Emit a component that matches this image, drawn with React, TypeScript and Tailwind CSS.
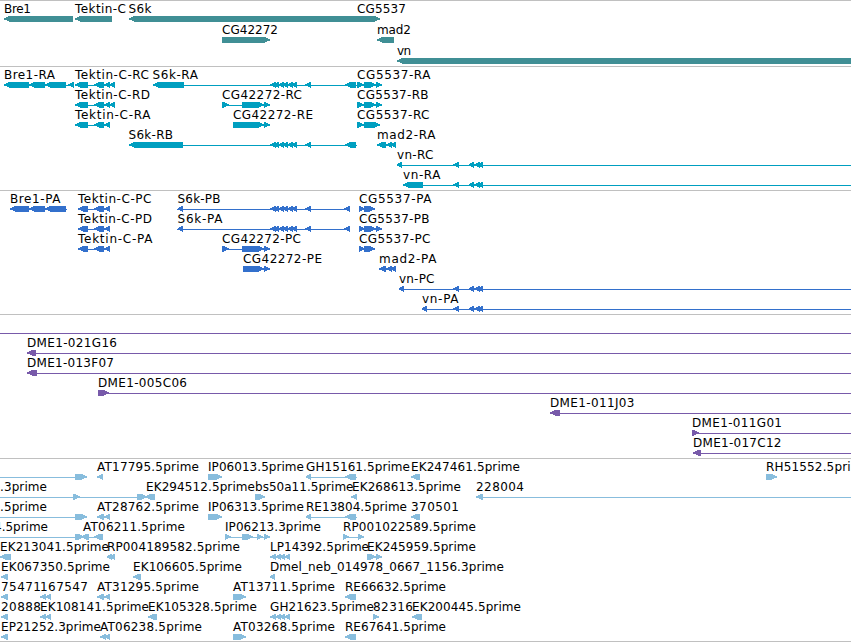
// GenomeTracks.tsx
type Dir = "L" | "R";

// [direction, start, end]
type Exon = [Dir, number, number];

interface Feature {
  name?: string;
  x?: number;
  end?: number; // right edge of the label
  line?: [number, number];
  exons?: Exon[];
}

interface TrackData {
  id: string;
  height: number;
  pitch: number;
  color: string;
  rows: Feature[][];
}

const WIDTH = 851;

// run of short exons whose heads overlap
const tips = (xs: number[], last: number): Exon[] =>
  xs.map((x) => ["L", x, Math.min(x + 6, last)]);

// exon groups shared by several transcripts
const s6k = tips([270, 273, 278, 282, 287, 291], 297);
const vn: Exon[] = [["L", 453, 459], ["L", 469, 474], ["L", 474, 480], ["L", 478, 483]];
const lp = tips([270, 275, 279, 284], 290);
const cg42272: Exon[] = [["R", 222, 229], ["R", 242, 264], ["R", 264, 270]];

const tracks: TrackData[] = [
  {
    id: "gene",
    height: 66,
    pitch: 21,
    color: "#408f95",
    rows: [
      [
        { name: "Bre1", x: 4, end: 31, exons: [["L", 4, 73]] },
        { name: "Tektin-C", x: 75, end: 126, exons: [["L", 75, 112]] },
        { name: "S6k", x: 128.5, end: 151.5, exons: [["L", 129, 358]] },
        { name: "CG5537", x: 357, end: 406, exons: [["R", 357, 380]] },
      ],
      [
        { name: "CG42272", x: 222, end: 278, exons: [["R", 222, 270]] },
        { name: "mad2", x: 377, end: 411, exons: [["L", 377, 394]] },
      ],
      [{ name: "vn", x: 397, end: 411, exons: [["L", 397, 851]] }],
    ],
  },
  {
    id: "transcript",
    height: 124,
    pitch: 20,
    color: "#009fc0",
    rows: [
      [
        { name: "Bre1-RA", x: 4, end: 55, line: [4, 74], exons: [["L", 4, 29], ["L", 29, 45], ["L", 45, 66], ["L", 68, 74]] },
        { name: "Tektin-C-RC", x: 75, end: 149, line: [75, 115], exons: [["L", 75, 88], ["L", 94, 104], ["L", 104, 110], ["L", 109, 115]] },
        { name: "S6k-RA", x: 152.5, end: 198, line: [153, 357], exons: [["L", 153, 184], ...s6k, ["L", 305, 311], ["L", 345, 356]] },
        { name: "CG5537-RA", x: 357, end: 430.5, line: [357, 381], exons: [["R", 357, 364], ["R", 364, 376], ["R", 376, 382]] },
      ],
      [
        { name: "Tektin-C-RD", x: 75, end: 150, line: [75, 115], exons: [["L", 75, 88], ["L", 94, 104], ["L", 104, 110], ["L", 109, 115]] },
        { name: "CG42272-RC", x: 222, end: 302, line: [222, 269], exons: cg42272 },
        { name: "CG5537-RB", x: 357, end: 428.5, line: [357, 381], exons: [["R", 357, 364], ["R", 364, 376], ["R", 376, 382]] },
      ],
      [
        { name: "Tektin-C-RA", x: 75, end: 150.5, line: [75, 110], exons: [["L", 75, 88], ["L", 94, 104], ["L", 104, 110]] },
        { name: "CG42272-RE", x: 233, end: 313, line: [233, 269], exons: [["R", 233, 264], ["R", 264, 270]] },
        { name: "CG5537-RC", x: 357, end: 429.5, line: [357, 379], exons: [["R", 357, 364], ["R", 364, 380]] },
      ],
      [
        { name: "S6k-RB", x: 128.5, end: 173, line: [129, 357], exons: [["L", 129, 183], ...s6k, ["L", 305, 311], ["L", 345, 356]] },
        { name: "mad2-RA", x: 377, end: 435.5, line: [377, 396], exons: [["L", 377, 386], ["L", 386, 392], ["L", 390, 396]] },
      ],
      [{ name: "vn-RC", x: 397, end: 433.5, line: [397, 851], exons: [["L", 397, 402], ...vn] }],
      [{ name: "vn-RA", x: 403, end: 440.5, line: [403, 851], exons: [["L", 403, 423], ...vn] }],
    ],
  },
  {
    id: "protein",
    height: 124,
    pitch: 20,
    color: "#3370cc",
    rows: [
      [
        { name: "Bre1-PA", x: 10, end: 60.5, line: [10, 67], exons: [["L", 10, 29], ["L", 29, 45], ["L", 45, 66]] },
        { name: "Tektin-C-PC", x: 78, end: 151.5, line: [78, 110], exons: [["L", 78, 88], ["L", 94, 104], ["L", 104, 110]] },
        { name: "S6k-PB", x: 177.5, end: 220.5, line: [177, 350], exons: [["L", 178, 183], ...s6k, ["L", 305, 311], ["L", 344, 350]] },
        { name: "CG5537-PA", x: 359, end: 431.5, line: [359, 374], exons: [["R", 359, 365], ["R", 364, 375]] },
      ],
      [
        { name: "Tektin-C-PD", x: 78, end: 152, line: [78, 110], exons: [["L", 78, 88], ["L", 94, 104], ["L", 104, 110]] },
        { name: "S6k-PA", x: 177.5, end: 222.5, line: [177, 350], exons: [["L", 178, 183], ...s6k, ["L", 305, 311], ["L", 344, 350]] },
        { name: "CG5537-PB", x: 359, end: 429.5, line: [359, 381], exons: [["R", 359, 365], ["R", 364, 376], ["R", 376, 382]] },
      ],
      [
        { name: "Tektin-C-PA", x: 78, end: 152.5, line: [78, 110], exons: [["L", 78, 88], ["L", 94, 104], ["L", 104, 110]] },
        { name: "CG42272-PC", x: 222, end: 301, line: [222, 269], exons: cg42272 },
        { name: "CG5537-PC", x: 359, end: 430.5, line: [359, 374], exons: [["R", 359, 365], ["R", 364, 375]] },
      ],
      [
        { name: "CG42272-PE", x: 243, end: 322, line: [243, 269], exons: [["R", 243, 264], ["R", 264, 270]] },
        { name: "mad2-PA", x: 379, end: 436.5, line: [379, 396], exons: [["L", 379, 386], ["L", 386, 392], ["L", 390, 396]] },
      ],
      [{ name: "vn-PC", x: 399, end: 434.5, line: [399, 851], exons: [["L", 399, 404], ...vn] }],
      [{ name: "vn-PA", x: 422, end: 458.5, line: [422, 851], exons: [["L", 422, 427], ...vn] }],
    ],
  },
  {
    id: "bac",
    height: 144,
    pitch: 20,
    color: "#785aaa",
    rows: [
      [{ line: [0, 851] }],
      [{ name: "DME1-021G16", x: 27, end: 117, line: [27, 851], exons: [["L", 27, 36]] }],
      [{ name: "DME1-013F07", x: 27, end: 114, line: [27, 851], exons: [["L", 27, 37]] }],
      [{ name: "DME1-005C06", x: 98, end: 187, line: [98, 851], exons: [["R", 98, 109]] }],
      [{ name: "DME1-011J03", x: 550, end: 634.5, line: [550, 851], exons: [["L", 550, 560]] }],
      [{ name: "DME1-011G01", x: 692, end: 782, line: [692, 851], exons: [["R", 692, 699]] }],
      [{ name: "DME1-017C12", x: 693, end: 781.5, line: [693, 851], exons: [["L", 693, 701]] }],
    ],
  },
  {
    id: "est",
    height: 183,
    pitch: 20,
    color: "#88bddd",
    rows: [
      [
        { line: [0, 86], exons: [["R", 75, 87]] },
        { name: "AT17795.5prime", x: 97, end: 199, exons: [["L", 97, 103]] },
        { name: "IP06013.5prime", x: 208, end: 304, exons: [["R", 208, 222]] },
        { name: "GH15161.5prime", x: 306, end: 410, line: [306, 357], exons: [["L", 306, 311], ["L", 345, 356]] },
        { name: "EK247461.5prime", x: 411, end: 520, exons: [["L", 411, 420]] },
        { name: "RH51552.5prime", x: 766, end: 870, exons: [["R", 766, 777]] },
      ],
      [
        { name: ".3prime", x: 0, end: 47, line: [0, 155], exons: [["R", 73, 80], ["R", 137, 147], ["L", 145, 155]] },
        { name: "EK294512.5prime", x: 146, end: 255 },
        { name: "bs50a11.5prime", x: 255, end: 353.5, exons: [["R", 255, 265]] },
        { name: "EK268613.5prime", x: 352, end: 461, exons: [["L", 351, 357]] },
        { name: "228004", x: 476, end: 524, line: [476, 851], exons: [["L", 476, 483]] },
      ],
      [
        { name: ".5prime", x: 0, end: 47, line: [0, 85], exons: [["R", 75, 87]] },
        { name: "AT28762.5prime", x: 97, end: 199, exons: [["L", 97, 104], ["L", 104, 110]] },
        { name: "IP06313.5prime", x: 208, end: 304, exons: [["R", 208, 222]] },
        { name: "RE13804.5prime", x: 306, end: 407, line: [306, 357], exons: [["L", 306, 311], ["L", 345, 356]] },
        { name: "370501", x: 411, end: 459, exons: [["L", 411, 420]] },
      ],
      [
        { name: "4.5prime", x: -6, end: 48, line: [0, 103], exons: [["R", 75, 84], ["L", 81, 89], ["L", 94, 103]] },
        { name: "AT06211.5prime", x: 83, end: 185 },
        { name: "IP06213.3prime", x: 225, end: 321, line: [225, 268], exons: [["R", 225, 231], ["R", 242, 253], ["R", 257, 263], ["R", 264, 270]] },
        { name: "RP001022589.5prime", x: 343, end: 476, line: [343, 362], exons: [["R", 343, 349], ["R", 358, 364]] },
      ],
      [
        { name: "EK213041.5prime", x: 0, end: 109, exons: [["L", 0, 11]] },
        { name: "RP004189582.5prime", x: 107, end: 240, exons: [["L", 107, 112], ["L", 110, 115]] },
        { name: "LP14392.5prime", x: 270, end: 369, exons: lp },
        { name: "EK245959.5prime", x: 367, end: 476, line: [367, 380], exons: [["R", 367, 376], ["R", 376, 382]] },
      ],
      [
        { name: "EK067350.5prime", x: 1, end: 110, exons: [["L", 1, 8]] },
        { name: "EK106605.5prime", x: 133, end: 242, exons: [["L", 133, 141]] },
        { name: "Dmel_neb_014978_0667_1156.3prime", x: 270, end: 504, exons: [["L", 270, 275]] },
      ],
      [
        { name: "75471", x: 1, end: 41, exons: [["L", 1, 8]] },
        { name: "167547", x: 40, end: 88, exons: [["L", 40, 46], ["L", 45, 51]] },
        { name: "AT31295.5prime", x: 97, end: 199, exons: [["L", 97, 104], ["L", 104, 110]] },
        { name: "AT13711.5prime", x: 233, end: 335, exons: [["R", 233, 246]] },
        { name: "RE66632.5prime", x: 345, end: 446, exons: [["L", 345, 356]] },
      ],
      [
        { name: "20888", x: 1, end: 41, exons: [["L", 1, 8]] },
        { name: "EK108141.5prime", x: 40, end: 149, exons: [["L", 40, 46], ["L", 45, 51]] },
        { name: "EK105328.5prime", x: 148, end: 257, exons: [["L", 148, 157]] },
        { name: "GH21623.5prime", x: 270, end: 374, exons: lp },
        { name: "82316", x: 373, end: 413, exons: [["R", 373, 379]] },
        { name: "EK200445.5prime", x: 412, end: 521, exons: [["L", 412, 422]] },
      ],
      [
        { name: "EP21252.3prime", x: 1, end: 101, exons: [["L", 1, 8]] },
        { name: "AT06238.5prime", x: 100, end: 202, exons: [["L", 100, 106], ["L", 104, 110]] },
        { name: "AT03268.5prime", x: 233, end: 335, exons: [["R", 233, 246]] },
        { name: "RE67641.5prime", x: 345, end: 446, exons: [["L", 345, 356]] },
      ],
    ],
  },
];

// 6px high bar with a pointed end
function exonPoints([dir, a, b]: Exon, top: number) {
  const head = Math.min(6, b - a);
  const bottom = top + 6;
  if (dir === "L") {
    return `${a},${top + 2.2} ${a + head},${top - 0.4} ${b},${top - 0.4} ${b},${bottom} ${a + head},${bottom} ${a},${top + 3.4}`;
  }
  return `${b},${top + 2.2} ${b - head},${top - 0.4} ${a},${top - 0.4} ${a},${bottom} ${b - head},${bottom} ${b},${top + 3.4}`;
}

function Track({ track }: { track: TrackData }) {
  return (
    <section className="border-t border-[#c0c0c0]" style={{ height: track.height }}>
      <svg width={WIDTH} height={track.height - 1} className="block" fill={track.color}>
        {track.rows.map((row, r) => {
          const y = r * track.pitch - 1;
          return (
            <g key={r}>
              {row.map((f, i) => (
                <g key={i} shapeRendering="crispEdges">
                  {f.line && <rect x={f.line[0]} y={y + 19} width={f.line[1] - f.line[0]} height={1} />}
                  {f.exons?.map((e, n) => (
                    <polygon key={n} points={exonPoints(e, y + 16)} />
                  ))}
                </g>
              ))}
              {row.map(
                (f) =>
                  f.name && (
                    <text
                      key={f.name}
                      x={f.x}
                      y={y + 13}
                      textLength={f.end! - f.x!}
                      lengthAdjust="spacing"
                      className="fill-black text-[12px]"
                    >
                      {f.name}
                    </text>
                  )
              )}
            </g>
          );
        })}
      </svg>
    </section>
  );
}

export default function App() {
  return (
    <main className="w-[851px] h-[642px] overflow-hidden bg-white border-b border-[#c0c0c0] font-['DejaVu_Sans',sans-serif]">
      {tracks.map((t) => (
        <Track key={t.id} track={t} />
      ))}
    </main>
  );
}
